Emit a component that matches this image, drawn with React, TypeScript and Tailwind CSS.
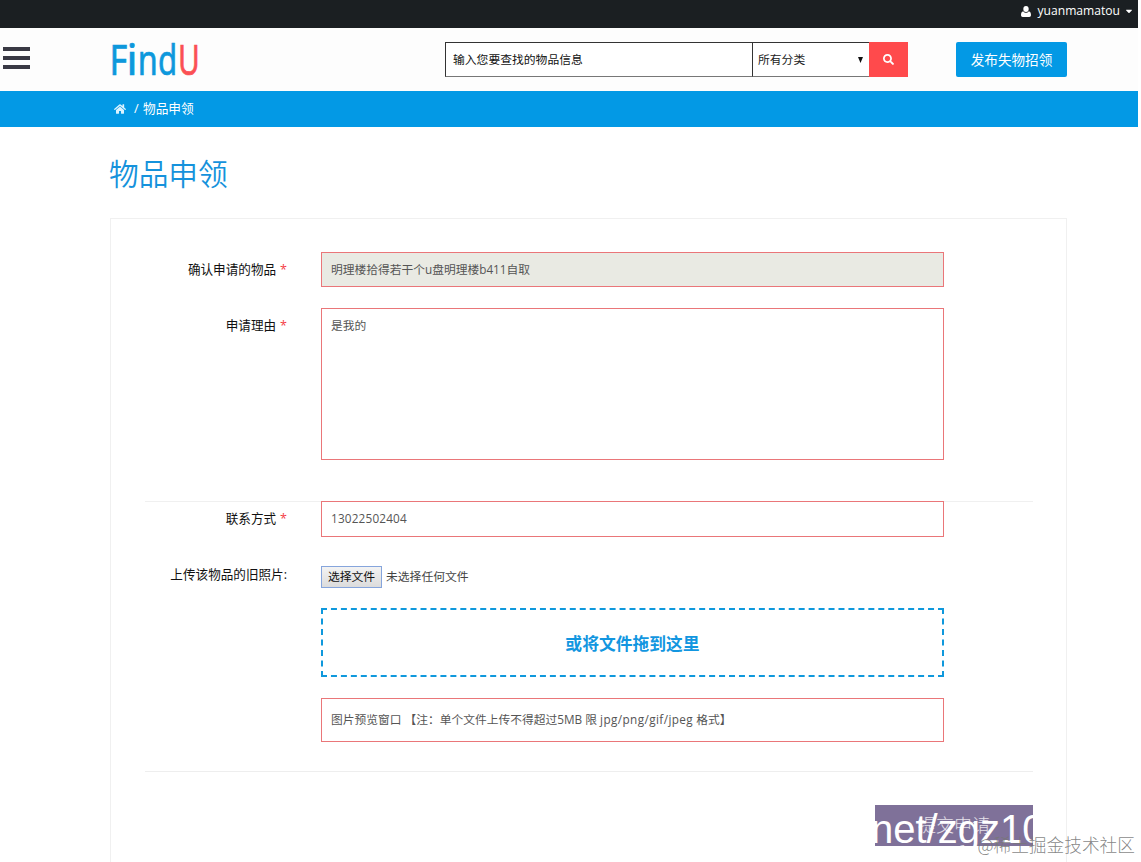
import { ReactNode, useState } from "react";
import { FaHome, FaSearch, FaCaretDown } from "react-icons/fa";

const inputClass =
  "block w-[623px] border border-[#ea7679] px-[9px] text-[11.75px] text-[#555] outline-none";

// condensed wordmark, one entry per letter
const logoLetters = [
  { char: "F", x: -0.4, width: 17.8, color: "#0d98dc" },
  { char: "i", x: 16.5, width: 11, color: "#0d98dc" },
  { char: "n", x: 27.8, width: 20, color: "#0d98dc" },
  { char: "d", x: 48.1, width: 19.2, color: "#0d98dc" },
  { char: "U", x: 68, width: 21.8, color: "#fb5054" },
];

function Logo() {
  return (
    <svg
      width="90"
      height="44"
      viewBox="0 0 90 44"
      className="block overflow-visible font-['Noto_Sans',sans-serif] text-[42.5px]"
    >
      {logoLetters.map((l) => (
        <text
          key={l.char}
          x={l.x}
          y="36"
          textLength={l.width}
          lengthAdjust="spacingAndGlyphs"
          fill={l.color}
          stroke={l.color}
          strokeWidth="0.7"
        >
          {l.char}
        </text>
      ))}
    </svg>
  );
}

function UserIcon() {
  return (
    <svg width="10" height="11" viewBox="0 0 10 11" fill="currentColor" className="mr-[7px]">
      <ellipse cx="5" cy="3" rx="2.7" ry="3" />
      <path d="M2.2 5.2C.6 5.6 0 7.2 0 9c0 1.200.7 2 1.700 2h6.600C9.300 11 10 10.200 10 9c0-1.800-.6-3.400-2.200-3.800C7 6.200 6 6.700 5 6.700S3 6.200 2.200 5.200z" />
    </svg>
  );
}

function Row({ label, required, className, children }: {
  label?: string;
  required?: boolean;
  className?: string;
  children: ReactNode;
}) {
  return (
    <div className={`flex ${className ?? ""}`}>
      <label className="w-[176px] shrink-0 pt-[8px] text-right text-[12.6px] leading-[20px] text-[#111]">
        {label}
        {required && <span className="ml-[4px] text-[#f43c46]">*</span>}
      </label>
      <div className="ml-[34px]">{children}</div>
    </div>
  );
}

export default function App() {
  const [keyword, setKeyword] = useState("输入您要查找的物品信息");
  const [reason, setReason] = useState("是我的");
  const [contact, setContact] = useState("13022502404");

  return (
    <div className="relative h-[862px] w-[1141px] overflow-hidden bg-white font-['Open_Sans','Noto_Sans_CJK_SC',sans-serif]">
      <div className="w-[1138px]">
        {/* Top bar */}
        <div className="flex h-[28px] items-start justify-end bg-[#1b1f22] pr-[4px] pt-[2px] text-white">
          <div className="flex h-[18px] items-center">
            <UserIcon />
            <span className="text-[12.1px] leading-[18px]">yuanmamatou</span>
            <FaCaretDown className="ml-[4px] size-[10px]" />
          </div>
        </div>

        {/* Header */}
        <header className="flex h-[63px] items-start bg-[#fdfdfd] pt-[14px]">
          <button className="ml-[3px] mt-[5px] flex w-[27px] flex-col gap-[5px]">
            <span className="h-[4px] w-full bg-[#393944]" />
            <span className="h-[4px] w-full bg-[#393944]" />
            <span className="h-[4px] w-full bg-[#393944]" />
          </button>
          <a href="#" className="ml-[80px] -mt-[3px] w-[90px]">
            <Logo />
          </a>
          <div className="ml-[245px] flex h-[35px]">
            <input
              className="w-[308px] border border-[#333] border-b-[#777] bg-white px-[7px] text-[11.8px] text-[#111] outline-none"
              value={keyword}
              onChange={(e) => setKeyword(e.target.value)}
            />
            <div className="flex w-[116px] items-center justify-between border-y border-[#333] border-b-[#777] bg-white pl-[5px] pr-[6px] text-[11.8px] text-[#222]">
              <span className="pt-px">所有分类</span>
              <svg width="5" height="6" viewBox="0 0 5 6">
                <path d="M0 0h5L2.5 6z" fill="#111" />
              </svg>
            </div>
            <button className="flex w-[39px] items-center justify-center bg-[#ff4a4c] text-white">
              <FaSearch className="size-[11px]" />
            </button>
          </div>
          <button className="ml-[48px] h-[35px] w-[111px] rounded-[2px] bg-[#0399e5] pt-[2px] text-[13.6px] text-white">
            发布失物招领
          </button>
        </header>

        {/* Breadcrumb */}
        <nav className="flex h-[36px] items-center bg-[#0399e5] pl-[114px] text-[12.7px] text-white">
          <FaHome className="size-[12px] text-[#dcf3ff]" />
          <span className="ml-[8px]">/ <span className="ml-px">物品申领</span></span>
        </nav>

        <main className="pl-[110px]">
          <h1 className="-ml-[1px] h-[91px] pt-[25px] text-[29.7px] font-[350] leading-[44px] text-[#1592dc]">
            物品申领
          </h1>

          <form className="h-[660px] w-[957px] border border-[#f0f0f0] pt-[33px]">
            <Row label="确认申请的物品" required>
              <input
                className={`${inputClass} h-[35px] bg-[#e9eae3] pb-[2px]`}
                value="明理楼拾得若干个u盘明理楼b411自取"
                readOnly
              />
            </Row>
            <Row label="申请理由" required className="mt-[21px]">
              <textarea
                className={`${inputClass} h-[152px] resize-none pt-[6px] leading-[20px]`}
                value={reason}
                onChange={(e) => setReason(e.target.value)}
              />
            </Row>

            <hr className="ml-[34px] mt-[41px] w-[888px] border-[#f0f0f0]" />

            <Row label="联系方式" required className="-mt-px">
              <input
                className={`${inputClass} h-[36px] bg-white pb-[2px] tracking-[0.18px]`}
                value={contact}
                onChange={(e) => setContact(e.target.value)}
              />
            </Row>
            <Row label="上传该物品的旧照片:" className="mt-[20px]">
              <div className="mt-[9px] flex h-[22px] items-center text-[11.8px] text-[#444]">
                <button
                  type="button"
                  className="h-[22px] w-[61px] border border-[#86a5dc] bg-linear-to-b from-[#f3f3f3] to-[#dcdcdc] text-[#111]"
                >
                  选择文件
                </button>
                <span className="ml-[4px]">未选择任何文件</span>
              </div>
              <div className="mt-[20px] flex h-[69px] w-[623px] items-center justify-center border-2 border-dashed border-[#0f98dc] pt-[2px] text-[16.8px] font-bold text-[#1296e0]">
                或将文件拖到这里
              </div>
              <div className={`${inputClass} mt-[21px] h-[44px] leading-[41px]`}>
                图片预览窗口 【注：单个文件上传不得超过5MB 限{" "}
                <span className="tracking-[0.4px]">jpg/png/gif/jpeg</span> 格式】
              </div>
            </Row>

            <hr className="ml-[34px] mt-[29px] w-[888px] border-[#eee]" />

            <button
              type="button"
              className="relative ml-[764px] mt-[33px] block h-[41px] w-[158px] overflow-hidden bg-[#7f7199] text-[18px] text-white/80"
            >
              <span className="font-light">提交申请</span>
              <span className="absolute -left-[4px] top-[4px] font-['Liberation_Sans',sans-serif] text-[40px] leading-[40px] text-white">
                net/zgz10
              </span>
            </button>
          </form>
        </main>
      </div>

      <span className="absolute right-[6px] top-[832px] whitespace-nowrap font-['Noto_Sans_CJK_SC',sans-serif] text-[17.7px] font-light leading-[24px] text-[#777]/90">
        @稀土掘金技术社区
      </span>
    </div>
  );
}
